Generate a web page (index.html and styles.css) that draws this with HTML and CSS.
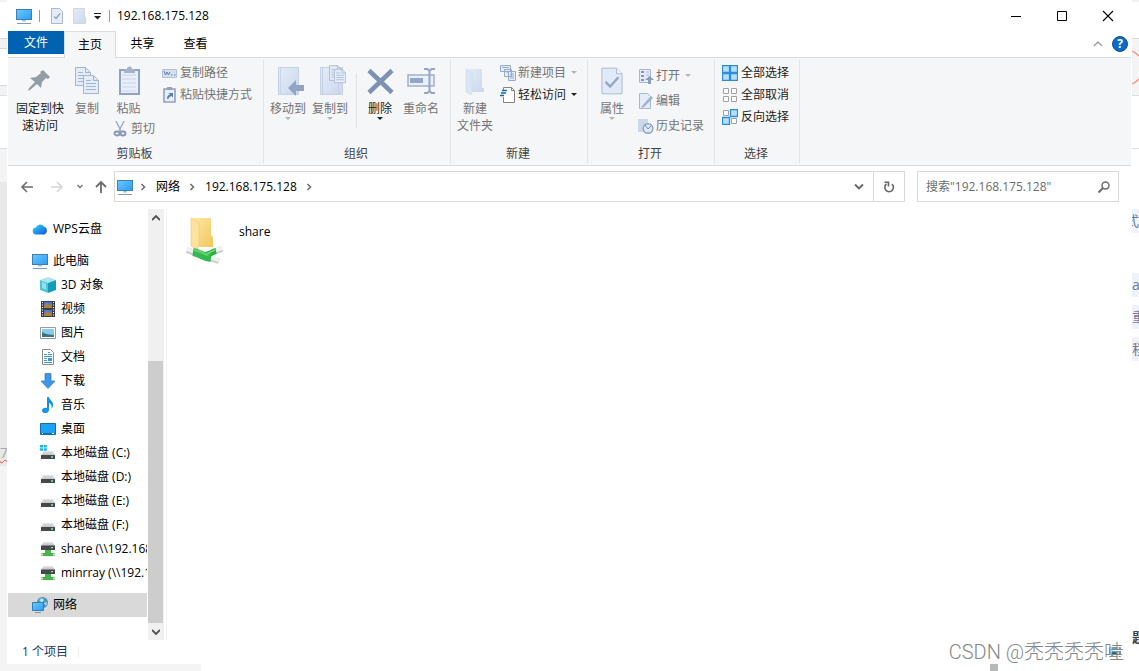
FILE: index.html
```html
<!DOCTYPE html>
<html lang="zh-CN">
<head>
<meta charset="utf-8">
<title>192.168.175.128</title>
<link rel="stylesheet" href="styles.css">
</head>
<body>
<svg class="defs" aria-hidden="true">
  <defs>
    <linearGradient id="screen" x1="0" y1="0" x2="1" y2="1"><stop offset="0" stop-color="#6cc8ff"/><stop offset="1" stop-color="#2a9df4"/></linearGradient>
    <linearGradient id="pale" x1="0" y1="0" x2="1" y2="1"><stop offset="0" stop-color="#e4ecf7"/><stop offset="1" stop-color="#cbd8ec"/></linearGradient>
    <linearGradient id="cloud" x1="0" y1="0" x2="1" y2="1"><stop offset="0" stop-color="#2fe0e0"/><stop offset=".5" stop-color="#1e96f0"/><stop offset="1" stop-color="#1a4fe0"/></linearGradient>
    <linearGradient id="gold" x1="0" y1="0" x2="1" y2="1"><stop offset="0" stop-color="#ffe9a6"/><stop offset="1" stop-color="#f0c75e"/></linearGradient>
    <linearGradient id="lid" x1="0" y1="0" x2="0" y2="1"><stop offset="0" stop-color="#e2e4e6"/><stop offset="1" stop-color="#b9bcc0"/></linearGradient>
    <symbol id="pc" viewBox="0 0 16 16"><rect x=".5" y="1.5" width="15" height="10" fill="url(#screen)" stroke="#3f7fae"/><path d="M6 12h4v1.5H6z" fill="#9cc4dc"/><path d="M1 15.5h14" stroke="#8398a8"/></symbol>
    <symbol id="chev" viewBox="0 0 8 8"><path d="M2.5 1l3 3-3 3" fill="none" stroke="#6b6b6b" stroke-width="1.5"/></symbol>
    <symbol id="disk" viewBox="0 0 16 16"><path d="M3.500 6h9L15 11H1z" fill="url(#lid)"/><path d="M1 10h14v4H1z" fill="#46494c"/><path d="M11 12h2" stroke="#7df08a" stroke-width="1.300"/></symbol>
    <symbol id="netdisk" viewBox="0 0 16 16"><path d="M3.500 1h9L15 5H1z" fill="url(#lid)"/><path d="M1 4.500h14V9H1z" fill="#46494c"/><path d="M11 6.700h2" stroke="#7df08a" stroke-width="1.300"/><path d="M5 9h6v3h4v3H1v-3h4z" fill="#45b549"/><path d="M1 13.500h2M13 13.500h2" stroke="#c9e4ca" stroke-width="2"/></symbol>
    <symbol id="sheetcheck" viewBox="0 0 24 30"><path d="M1 1h16l6 6v22H1z" fill="#e0e9f6" stroke="#a8b8d2"/><path d="M17 1v6h6" fill="#f4f7fb" stroke="#a8b8d2"/><path d="M5 16l5 5 9-10" fill="none" stroke="#93a6c6" stroke-width="2.500"/></symbol>
    <symbol id="page" viewBox="0 0 16 19"><path d="M.5.5h10l5 5v13H.5z" fill="#e4ecf7" stroke="#a3b4cf"/><path d="M10.500.5v5h5M3 5.500h5M3 8.500h10M3 11.500h10M3 14.500h10" fill="none" stroke="#a3b4cf"/></symbol>
    <symbol id="drop" viewBox="0 0 6 4"><path d="M0 0h6L3 3z" fill="currentColor"/></symbol>
  </defs>
</svg>
<div class="desk">
  <div class="edge edge-left" aria-hidden="true">
    <i class="l1"></i><i class="l2"></i><i class="l3"></i><i class="l4"></i><i class="l5"></i><i class="l6"></i>
    <div class="l7"><span>7:</span></div>
  </div>
  <div class="window">
    <header class="titlebar">
      <svg class="i16"><use href="#pc"/></svg>
      <i class="bar"></i>
      <button class="qa" aria-label="属性"><svg width="12" height="16" viewBox="0 0 12 16"><path d="M.5.5h8l3 3v12H.5z" fill="#e6edf8" stroke="#a9b7d0"/><path d="M3 8.500l2 2 4-5" fill="none" stroke="#91a3c4" stroke-width="1.500"/></svg></button>
      <button class="qa" aria-label="新建文件夹"><svg width="14" height="16" viewBox="0 0 14 16"><path d="M.5.500h11v9h1v6H.5z" fill="url(#pale)" stroke="#ccd7ea"/></svg></button>
      <button class="qa custom" aria-label="自定义快速访问工具栏"><svg width="8" height="8" viewBox="0 0 8 8"><path d="M0 1.500h7" stroke="#222"/><path d="M0 4h7L3.500 7.500z" fill="#222"/></svg></button>
      <i class="bar"></i>
      <h1>192.168.175.128</h1>
      <div class="controls">
        <button aria-label="最小化"><svg width="12" height="12" viewBox="0 0 12 12"><path d="M1 6.500h10" stroke="#000"/></svg></button>
        <button aria-label="最大化"><svg width="12" height="12" viewBox="0 0 12 12"><path d="M1.500 1.500h9v9h-9z" fill="none" stroke="#000"/></svg></button>
        <button aria-label="关闭"><svg width="12" height="12" viewBox="0 0 12 12"><path d="M1 1l10 10M11 1L1 11" stroke="#000" stroke-width="1.100"/></svg></button>
      </div>
    </header>
    <nav class="tabs">
      <button class="file">文件</button><button class="active">主页</button><button>共享</button><button>查看</button>
      <div class="tabs-end">
        <button aria-label="最小化功能区"><svg width="10" height="8" viewBox="0 0 10 8"><path d="M1 6l4-4 4 4" fill="none" stroke="#999" stroke-width="1.300"/></svg></button>
        <button class="help" aria-label="帮助">?</button>
      </div>
    </nav>
    <section class="ribbon">
      <div class="group g-clip">
        <div class="tools">
          <button class="big on pin"><svg width="32" height="32" viewBox="0 0 32 32"><path d="M19 5l7 7-2 2-2-1-4 4-1 6-4-4-7 6-2 1 1-3 6-6-5-4 6-1 5-4-1-1z" fill="#949ca4"/></svg><span>固定到快<br>速访问</span></button>
          <button class="big copy"><svg width="32" height="32" viewBox="0 0 32 32"><use href="#page" x="4" y="2" width="16" height="19"/><use href="#page" x="12" y="10" width="16" height="19"/></svg><span>复制</span></button>
          <div class="pastecol">
            <button class="big"><svg width="32" height="32" viewBox="0 0 32 32"><path d="M7 5h19v24H7z" fill="#e8eff9" stroke="#8fa2c2" stroke-width="2"/><path d="M9 10h14M9 14h14M9 18h14M9 22h14M9 26h14" stroke="#c8d4e7"/><path d="M11 4h3a2.500 2.500 0 015 0h3v4H11z" fill="#a4b2ca"/></svg><span>粘贴</span></button>
            <button class="small"><svg class="i16" viewBox="0 0 16 16"><path d="M4 0l5 10M12 0L7 10" stroke="#a0aec6" stroke-width="1.500"/><ellipse cx="5" cy="12.500" rx="2.500" ry="2" fill="none" stroke="#8296ba" stroke-width="1.800"/><ellipse cx="11" cy="12.500" rx="2.500" ry="2" fill="none" stroke="#8296ba" stroke-width="1.800"/></svg>剪切</button>
          </div>
          <div class="stack">
            <button class="small"><svg class="i16" viewBox="0 0 16 16"><path d="M.5 4.500h14v8H.5z" fill="#d5e0f0" stroke="#b3c1d8"/><path d="M2 6l1.500 4L5 7l1.500 3L8 7M9 10h1.500M12 10h1.500" fill="none" stroke="#667ea6"/></svg>复制路径</button>
            <button class="small"><svg class="i16" viewBox="0 0 16 16"><path d="M2 2h11v13H2z" fill="#e8eff9" stroke="#8fa2c2" stroke-width="1.600"/><path d="M5 0h5v3H5z" fill="#8fa2c2"/><path d="M5 12c0-3 1-4 3-4.500L6.500 6H11v4.500L9.500 9C7 10 6.500 11 6.500 12z" fill="#5f7daa"/></svg>粘贴快捷方式</button>
          </div>
        </div>
        <div class="caption">剪贴板</div>
      </div>
      <div class="group g-org">
        <div class="tools">
          <button class="big"><svg width="32" height="32" viewBox="0 0 32 32"><path d="M6.500 2.500h20v27h-20z" fill="url(#pale)" stroke="#c3d0e5"/><path d="M8.500 3v26" stroke="#c9d5e8"/><path d="M16 23l8-8v5h8v6h-8v5z" fill="#93a4c3"/></svg><span>移动到</span><svg class="drop"><use href="#drop"/></svg></button>
          <button class="big"><svg width="32" height="32" viewBox="0 0 32 32"><path d="M6.500 2.500h22v27h-22z" fill="url(#pale)" stroke="#c3d0e5"/><path d="M8.500 3v26M24.500 18v11" stroke="#c3d0e5"/><use href="#page" x="15" y="0" width="13" height="16"/><use href="#page" x="20" y="3" width="12" height="16"/></svg><span>复制到</span><svg class="drop"><use href="#drop"/></svg></button>
          <i class="split"></i>
          <button class="big on del"><svg width="32" height="32" viewBox="0 0 32 32"><path d="M5 5.500l23 22M28 5.500l-23 22" stroke="#7c91b3" stroke-width="4.500"/></svg><span>删除</span><svg class="drop"><use href="#drop"/></svg></button>
          <button class="big ren"><svg width="32" height="32" viewBox="0 0 32 32"><path d="M3 10h26v11H3z" fill="#e8f0fb" stroke="#a0b0cc" stroke-width="1.500"/><path d="M5 13h13v5H5z" fill="#93a6c6"/><path d="M19 4h3.500l2 2 2-2H30M19 28h3.500l2-2 2 2H30M24.500 5v22" fill="none" stroke="#93a6c6" stroke-width="2"/></svg><span>重命名</span></button>
        </div>
        <div class="caption">组织</div>
      </div>
      <div class="group g-new">
        <div class="tools">
          <button class="big newf"><svg width="32" height="32" viewBox="0 0 32 32"><path d="M7 4h16v19h2v4H11z" fill="url(#pale)"/><path d="M7 4l6 4v20l-1 2-5-3z" fill="#dae6f5" stroke="#c6d4e7" stroke-width=".5"/></svg><span>新建<br>文件夹</span></button>
          <div class="stack">
            <button class="small"><svg class="i16" viewBox="0 0 16 16"><path d="M.5.500h10v6H.5zM4.500 4.500h7v7h-7zM8.500 6.500h7v9h-7z" fill="#e4ecf7" stroke="#97abc9"/><path d="M2 2.500h7M6 7h2M10 9h4M10 11h4M10 13h4" stroke="#97abc9"/></svg>新建项目<svg class="drop"><use href="#drop"/></svg></button>
            <button class="small on"><svg class="i16" viewBox="0 0 16 16"><path d="M3.500 4V.500h8l3 3v12h-11V10" fill="#fff" stroke="#858585"/><path d="M11.500.500v3h3" fill="none" stroke="#858585"/><path d="M2 3.500h5M1 6h5M0 8.500h4" stroke="#1767ac" stroke-width="1.300"/></svg>轻松访问<svg class="drop"><use href="#drop"/></svg></button>
          </div>
        </div>
        <div class="caption">新建</div>
      </div>
      <div class="group g-open">
        <div class="tools">
          <button class="big newf"><svg width="32" height="32" viewBox="0 0 32 32"><use href="#sheetcheck" x="5" y="1" width="22" height="30"/></svg><span>属性</span><svg class="drop"><use href="#drop"/></svg></button>
          <div class="stack tall">
            <button class="small"><svg class="i16" viewBox="0 0 16 16"><path d="M1.500 1.500h11v13h-11z" fill="#e4ecf7" stroke="#a6b6d0"/><path d="M3 4h3M3 8h3M3 12h3" stroke="#8297bc" stroke-width="2"/><path d="M8 4h3M8 7h3" stroke="#a6b6d0"/><path d="M10 16v-4H7l4.500-4 4.500 4h-3v4z" fill="#899dbe"/></svg>打开<svg class="drop"><use href="#drop"/></svg></button>
            <button class="small"><svg class="i16" viewBox="0 0 16 16"><path d="M1.500.500h8l3 3v12h-11z" fill="#e4ecf7" stroke="#a6b6d0"/><path d="M4 13l9-10 2 2-9 9-3 1z" fill="#9db0cf"/></svg>编辑</button>
            <button class="small"><svg class="i16" viewBox="0 0 16 16"><path d="M0 1h10v13H0z" fill="#cbd8eb"/><circle cx="10" cy="10.500" r="4.800" fill="#dfe8f4" stroke="#8da1c2" stroke-width="1.400"/><path d="M7 7l3 4 3-3" fill="none" stroke="#7389b1"/></svg>历史记录</button>
          </div>
        </div>
        <div class="caption">打开</div>
      </div>
      <div class="group g-sel">
        <div class="tools">
          <div class="stack">
            <button class="small on"><svg class="i16" viewBox="0 0 16 16"><path d="M.5.500h7v7h-7zM8.500.500h7v7h-7zM.5 8.500h7v7h-7zM8.500 8.500h7v7h-7z" fill="#b5dffb" stroke="#2b8ddb" stroke-width="1.300"/></svg>全部选择</button>
            <button class="small on"><svg class="i16" viewBox="0 0 16 16"><path d="M1.500 1.500h5v5h-5zM9.500 1.500h5v5h-5zM1.500 9.500h5v5h-5zM9.500 9.500h5v5h-5z" fill="#fff" stroke="#a2a2a2"/></svg>全部取消</button>
            <button class="small on"><svg class="i16" viewBox="0 0 16 16"><path d="M1.500 1.500h5v5h-5zM9.500 9.500h5v5h-5z" fill="#fff" stroke="#a2a2a2"/><path d="M8.500.500h7v7h-7zM.5 8.500h7v7h-7z" fill="#b5dffb" stroke="#2b8ddb" stroke-width="1.300"/></svg>反向选择</button>
          </div>
        </div>
        <div class="caption">选择</div>
      </div>
    </section>
    <div class="locbar">
      <div class="history">
        <button aria-label="后退"><svg width="14" height="12" viewBox="0 0 14 12"><path d="M13 6H2M7 1L2 6l5 5" fill="none" stroke="#6c6c6c" stroke-width="1.600"/></svg></button>
        <button aria-label="前进"><svg width="14" height="12" viewBox="0 0 14 12"><path d="M1 6h11M7 1l5 5-5 5" fill="none" stroke="#d4d4d4" stroke-width="1.600"/></svg></button>
        <button aria-label="最近位置"><svg width="8" height="6" viewBox="0 0 8 6"><path d="M1.500 1L4 3.500 6.500 1" fill="none" stroke="#777" stroke-width="1.400"/></svg></button>
        <button aria-label="上移"><svg width="12" height="14" viewBox="0 0 12 14"><path d="M6 13V2M1 7l5-5 5 5" fill="none" stroke="#6c6c6c" stroke-width="1.800"/></svg></button>
      </div>
      <div class="address">
        <div class="crumbs"><svg class="i16"><use href="#pc"/></svg><svg class="chev"><use href="#chev"/></svg><a href="#">网络</a><svg class="chev"><use href="#chev"/></svg><a href="#">192.168.175.128</a><svg class="chev"><use href="#chev"/></svg></div>
        <button class="expand" aria-label="以前的位置"><svg width="10" height="8" viewBox="0 0 10 8"><path d="M1 1.500l4 4 4-4" fill="none" stroke="#666" stroke-width="1.800"/></svg></button>
        <button class="refresh" aria-label="刷新"><svg width="12" height="12" viewBox="0 0 12 12"><path d="M9 3.200A4.300 4.300 0 113.500 3" fill="none" stroke="#666" stroke-width="1.600"/><path d="M1.500 1.200h4V5.500" fill="none" stroke="#666" stroke-width="1.600"/></svg></button>
      </div>
      <label class="search"><input type="search" aria-label="搜索" placeholder='搜索"192.168.175.128"'><svg width="12" height="12" viewBox="0 0 12 12"><circle cx="7.500" cy="4.500" r="3.500" fill="none" stroke="#6c6c6c" stroke-width="1.500"/><path d="M5 7l-4.500 4.500" stroke="#6c6c6c" stroke-width="2"/></svg></label>
    </div>
    <div class="content">
      <nav class="tree">
        <a href="#"><svg class="i16" viewBox="0 0 16 16"><path d="M4.500 13.500a3.500 3.500 0 01-.5-7 4.500 4.500 0 018-1 4.200 4.200 0 010 8z" fill="url(#cloud)"/></svg>WPS云盘</a>
        <a href="#" class="gap"><svg class="i16"><use href="#pc"/></svg>此电脑</a>
        <a href="#" class="sub"><svg class="i16" viewBox="0 0 16 16"><path d="M0 3l8-3 8 3-8 3z" fill="#a9e7f0"/><path d="M0 3l8 3v10l-8-3z" fill="#4fc4d8"/><path d="M16 3L8 6v10l8-3z" fill="#129db8"/><path d="M2 5l4 1.500v6L2 11z" fill="#95dfe9"/></svg>3D 对象</a>
        <a href="#" class="sub"><svg class="i16" viewBox="0 0 16 16"><path d="M1 0h14v16H1z" fill="#3e3e42"/><path d="M4 1h8v6H4zM4 9h8v6H4z" fill="#4978d8"/><path d="M4 5l3-3 3 2 2-1v4H4zM4 13l3-3 3 2 2-1v4H4z" fill="#a98044"/><path d="M2.500 1v15M13.500 1v15" stroke="#fff" stroke-dasharray="1 1.500"/></svg>视频</a>
        <a href="#" class="sub"><svg class="i16" viewBox="0 0 16 16"><path d="M.5 2.500h15v11H.5z" fill="#fff" stroke="#999"/><path d="M2 4h12v8H2z" fill="#8cc8f2"/><path d="M2 7l4 2 8 1v2H2z" fill="#397878"/></svg>图片</a>
        <a href="#" class="sub"><svg class="i16" viewBox="0 0 16 16"><path d="M2.500.500h8l3 3v12h-11z" fill="#fff" stroke="#8a8a8a"/><path d="M8 3.500h2M4 5.500h3M8 5.500h4M4 7.500h8M4 9.500h3M4 11.500h3M4 13.500h8" stroke="#3e94d4"/><path d="M8 9h4v3H8z" fill="#3e94d4"/></svg>文档</a>
        <a href="#" class="sub"><svg class="i16" viewBox="0 0 16 16"><path d="M5 .500h6V8h4l-7 7.500L1 8h4z" fill="#3d96e6" stroke="#2c78c0" stroke-width=".7"/></svg>下载</a>
        <a href="#" class="sub"><svg class="i16" viewBox="0 0 16 16"><path d="M7 0h2c0 3 5 4 4 9-.3 1-.8 2-1.500 2.500C12 8 10.500 6.500 9 6v7c0 4-7 4-7 .5 0-2 2.500-3.500 5-2.500z" fill="#1593ee"/></svg>音乐</a>
        <a href="#" class="sub"><svg class="i16" viewBox="0 0 16 16"><path d="M.5 2.500h15v11H.5z" fill="#1da1f8" stroke="#136da9"/><path d="M1 12.500h14" stroke="#1372b5"/><path d="M2 12.500h1M12 12.500h2" stroke="#fff"/></svg>桌面</a>
        <a href="#" class="sub"><svg class="i16" viewBox="0 0 16 16"><use href="#disk"/><path d="M0 0h3v2.500H0zM3.800 0h3v2.500h-3zM0 3.300h3v2.500H0zM3.800 3.300h3v2.500h-3z" fill="#12b6ed"/></svg>本地磁盘 (C:)</a>
        <a href="#" class="sub"><svg class="i16"><use href="#disk"/></svg>本地磁盘 (D:)</a>
        <a href="#" class="sub"><svg class="i16"><use href="#disk"/></svg>本地磁盘 (E:)</a>
        <a href="#" class="sub"><svg class="i16"><use href="#disk"/></svg>本地磁盘 (F:)</a>
        <a href="#" class="sub"><svg class="i16"><use href="#netdisk"/></svg>share (\\192.168.175.128)</a>
        <a href="#" class="sub"><svg class="i16"><use href="#netdisk"/></svg>minrray (\\192.168.175.128)</a>
        <a href="#" class="gap current"><svg class="i16" viewBox="0 0 16 16"><circle cx="10.500" cy="5.500" r="5.500" fill="#4a94b8"/><path d="M7 3l3-2 2 2-2 3zM12 6l3-1-1 4z" fill="#b5e2ee"/><path d="M.5 5.500h11v8H.5z" fill="url(#screen)" stroke="#2d7fb8"/><path d="M3 15.500h6" stroke="#8398a8"/></svg>网络</a>
      </nav>
      <div class="scroll">
        <button aria-label="向上滚动"><svg width="8" height="6" viewBox="0 0 8 6"><path d="M0 5l4-4 4 4" fill="none" stroke="#505050" stroke-width="1.800"/></svg></button>
        <div class="track"><i class="thumb"></i></div>
        <button aria-label="向下滚动"><svg width="8" height="6" viewBox="0 0 8 6"><path d="M0 1l4 4 4-4" fill="none" stroke="#505050" stroke-width="1.800"/></svg></button>
      </div>
      <main class="files">
        <a href="#" class="item"><svg width="40" height="48" viewBox="0 0 40 48"><path d="M6 2h20v17l2 2v10H12z" fill="url(#gold)"/><path d="M6 2l8 5v22l-2 5-6-4z" fill="#ffe39a" stroke="#edcc79" stroke-width=".7"/><path d="M2 34l8 3M37 33l-8 3M34 45l-9-3" stroke="#c9cdd0" stroke-width="6"/><path d="M2 33l8 3M37 32l-8 3M34 44l-9-3" stroke="#eff1f2" stroke-width="4"/><path d="M31 35c-5 1-6 4-11 4" fill="none" stroke="#2fa946" stroke-width="6"/><path d="M8 36c7 1 9 5 18 6" fill="none" stroke="#35b850" stroke-width="8"/><path d="M9 34c7 1 9 4 14 5M30 34c-4 1-5 3-8 4" fill="none" stroke="#62d66c" stroke-width="2"/></svg><span>share</span></a>
      </main>
    </div>
    <footer class="status"><span>1 个项目</span><i class="bar"></i>
      <button aria-label="大缩略图"><svg width="12" height="10" viewBox="0 0 12 10"><path d="M.5.500h11v9H.5z" fill="#5b9cda" stroke="#7895a8"/><path d="M1 6l4-1 6 2v2H1z" fill="#2c6266"/></svg></button>
    </footer>
  </div>
  <div class="edge edge-right" aria-hidden="true">
    <div class="r1"></div>
    <div class="r2"><svg width="7" height="57" viewBox="0 0 7 57"><path d="M0 12c3 1 5 3 7 5M0 45c3-1 5-3 7-5" fill="none" stroke="#ff8d78" stroke-width="1.300"/></svg></div>
    <div class="r3"></div>
    <span class="frag f1">式</span><span class="frag f2">al</span><span class="frag f3">重</span><span class="frag f4">程</span><span class="frag f5">题</span>
  </div>
  <div class="under" aria-hidden="true"><i class="shade"></i><i class="knob"></i></div>
  <div class="mark">CSDN @秃秃秃秃哇</div>
</div>
</body>
</html>
```

FILE: styles.css
```css
* { box-sizing: border-box; }
body { margin: 0; background: #fff; color: #000; font: 12px/18px "Open Sans", "Noto Sans CJK SC", sans-serif; }
button { border: 0; padding: 0; background: none; color: inherit; font: inherit; }
a { color: inherit; text-decoration: none; }
svg { flex: none; display: block; }
i { display: block; flex: none; }
.defs { position: absolute; width: 0; height: 0; }
.i16 { width: 16px; height: 16px; }
.desk { position: relative; min-height: 100vh; display: grid; grid-template-columns: 7px minmax(0, 1fr) 7px; grid-template-rows: 1fr 7px; overflow: hidden; }
.window { display: flex; flex-direction: column; padding-left: 1px; padding-right: 1px; background: #fff; }

/* neighbouring windows */
.edge { overflow: hidden; }
.edge-left { grid-row: 1 / 3; display: flex; flex-direction: column; }
.l1 { height: 2px; background: #f2f2f2; }
.l2 { height: 36px; }
.l3 { height: 11px; background: #f2f2f2; border-top: 1px solid #d8d8d8; border-bottom: 1px solid #d8d8d8; }
.l4 { height: 36px; }
.l5 { height: 11px; background: #f2f2f2; border-top: 1px solid #d8d8d8; border-bottom: 1px solid #e0e0e0; }
.l6 { height: 86px; background: linear-gradient(#fff 52px, #ddd 52px, #ddd 53px, #f4f4f4 53px); }
.l7 { flex: 1; padding-top: 262px; background: linear-gradient(#e8e8e8 284px, #f4f4f4 284px); color: #a8a8a8; font-size: 14px; }
.l7 span { text-decoration: underline wavy #f04444 1px; }
.edge-right { display: flex; flex-direction: column; color: #747a96; }
.r1 { height: 38px; border-top: 2px solid #f2f2f2; }
.r2 { height: 58px; background: #f4f4f4; border-top: 1px solid #ddd; border-bottom: 1px solid #ddd; }
.r3 { height: 53px; border-bottom: 1px solid #ddd; }
.frag { display: flex; justify-content: flex-end; height: 24px; width: 7px; flex: none; overflow: hidden; font-size: 14px; line-height: 24px; background: #eff3f9; }
.f1 { margin-top: 60px; }
.f2 { margin-top: 40px; justify-content: flex-start; }
.f3, .f4 { margin-top: 8px; justify-content: flex-start; }
.f5 { margin-top: 264px; justify-content: flex-start; background: none; color: #444; font-weight: bold; }
.under { grid-column: 2 / 4; display: flex; justify-content: space-between; }
.shade { width: 194px; background: #f4f4f4; }
.knob { width: 8px; margin-right: 141px; background: #b8b8b8; }
.mark { position: absolute; right: 15px; bottom: 4px; color: #85878a; font: 300 20px/30px Roboto, "Noto Sans CJK SC", sans-serif; text-shadow: 1px 1px #fff; }

/* title bar and tabs */
.titlebar { display: flex; align-items: center; height: 31px; padding-left: 8px; }
.bar { width: 1px; height: 12px; background: #999; }
.titlebar .bar { margin-left: 7px; }
.qa { margin-left: 11px; }
.qa + .qa { margin-left: 10px; }
.qa.custom { margin-left: 7px; }
h1 { margin: 0 0 0 7px; font: inherit; }
.controls { display: flex; margin-left: auto; }
.controls button { width: 46px; height: 30px; display: grid; place-items: center; }
.tabs { display: flex; height: 26px; padding-right: 3px; }
.tabs > button { width: 53px; }
.tabs > .file { width: 56px; height: 23px; background: #0063b1; color: #fff; }
.tabs > .active { width: 52px; height: 27px; z-index: 1; background: #f5f6f7; border: 1px solid #dadbdc; border-bottom: 0; }
.tabs-end { display: flex; align-items: center; gap: 9px; margin-left: auto; }
.help { width: 16px; height: 16px; border-radius: 8px; border: 1px solid #15508e; background: #0a6bcc; color: #fff; font-weight: bold; line-height: 14px; }

/* ribbon */
.ribbon { display: flex; height: 109px; background: #f5f6f7; border-top: 1px solid #dadbdc; border-bottom: 1px solid #dadbdc; }
.group { display: flex; flex-direction: column; margin: 2px 0; border-right: 1px solid #e2e3e4; }
.g-clip { width: 256px; }
.g-org { width: 187px; }
.g-new { width: 137px; }
.g-open { width: 127px; }
.g-sel { width: 85px; }
.tools { display: flex; height: 85px; padding-top: 1px; }
.caption { padding-right: 2px; text-align: center; color: #444; }
.big { display: flex; flex-direction: column; align-items: center; height: 74px; padding-top: 4px; width: 42px; color: #747474; line-height: 17px; white-space: nowrap; }
.big span { margin-top: 3px; }
.on { color: #222; }
.drop { width: 6px; height: 4px; color: #b4b4b4; }
.on .drop { color: #222; }
.pin { width: 64px; }
.copy { width: 30px; }
.pastecol { width: 53px; }
.pastecol .big { width: 53px; height: 59px; }
.small { display: flex; align-items: center; gap: 2px; height: 22px; color: #747474; white-space: nowrap; }
.small.on { color: #222; }
.small .drop { margin-left: 3px; }
.pastecol .small { margin-left: 10px; height: 18px; gap: 3px; }
.stack { padding: 1px 0 0 7px; }
.g-org .tools { padding-left: 3px; }
.split { width: 1px; height: 55px; margin: 12px 3px 0 5px; background: #dfe0e1; }
.del { width: 40px; }
.newf { width: 48px; }
.g-new .stack { padding-left: 1px; }
.g-open .stack { padding: 2px 0 0 2px; }
.g-sel .small { gap: 3px; }
.tall .small { height: 25px; }

/* location bar */
.locbar { display: flex; align-items: center; height: 41px; padding-right: 12px; }
.history { display: flex; width: 106px; padding-left: 12px; justify-content: flex-start; align-items: center; }
.history button { display: grid; place-items: center; width: 14px; height: 30px; }
.history button + button { margin-left: 16px; }
.history button:nth-child(3) { margin-left: 9px; }
.history button:nth-child(4) { margin-left: 7px; }
.address { flex: 1; display: flex; height: 31px; border: 1px solid #d9d9d9; }
.crumbs { flex: 1; display: flex; align-items: center; padding-left: 2px; }
.chev { width: 8px; height: 8px; margin: 0 8px; }
.crumbs .i16 + .chev { margin: 0 9px 0 6px; }
.crumbs a + .chev { margin: 0 9px 0 8px; }
.expand { width: 28px; display: grid; place-items: center; }
.refresh { width: 31px; border-left: 1px solid #d9d9d9; display: grid; place-items: center; }
.search { display: flex; align-items: center; width: 202px; height: 31px; margin-left: 12px; padding: 0 8px; border: 1px solid #d9d9d9; }
.search input { flex: 1; min-width: 0; border: 0; padding: 0; outline: 0; background: none; font: inherit; }
.search input::placeholder { color: #6d6d6d; }

/* panes */
.content { flex: 1; display: flex; padding-top: 2px; }
.tree { width: 139px; padding-top: 8px; overflow: hidden; }
.tree a { display: flex; align-items: center; gap: 5px; height: 24px; padding-left: 24px; white-space: nowrap; }
.tree .sub { padding-left: 32px; }
.tree .gap { margin-top: 8px; }
.tree .current { background: #d9d9d9; }
.scroll { display: flex; flex-direction: column; width: 16px; margin-left: 1px; background: #f0f0f0; }
.scroll button { height: 17px; display: grid; place-items: center; }
.track { flex: 1; display: flex; flex-direction: column; justify-content: flex-end; }
.thumb { width: 15px; height: 66%; background: #cdcdcd; }
.files { flex: 1; margin-left: 2px; padding: 7px 0 0 18px; border-left: 1px solid #f3f3f3; }
.item { display: inline-flex; gap: 14px; }
.item span { padding-top: 7px; }
.status { display: flex; align-items: center; height: 24px; padding: 0 10px 0 14px; color: #1e395b; }
.status .bar { margin-left: 10px; background: #f0f0f0; }
.status button { margin-left: auto; }
```
